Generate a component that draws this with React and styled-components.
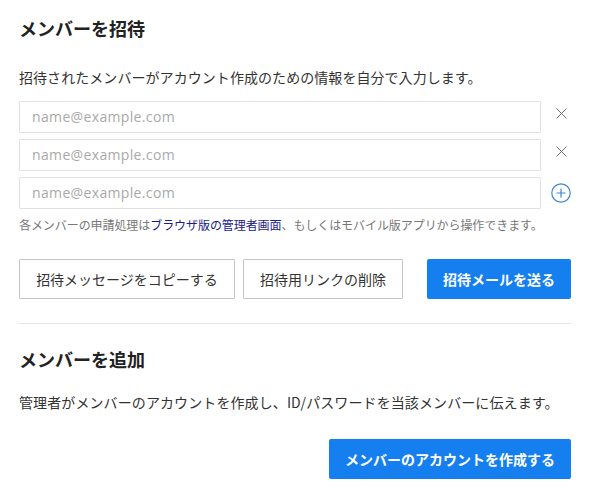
import React from "react";
import styled, { createGlobalStyle } from "styled-components";

const GlobalStyle = createGlobalStyle`
  html, body {
    margin: 0;
    padding: 0;
    background: #fff;
  }
  body {
    font-family: "Noto Sans CJK JP", "Noto Sans", sans-serif;
    color: #333;
  }
`;

const Page = styled.div`
  width: 552px;
  padding: 17px 26px 14px 19px;
`;

const Section = styled.section`
  display: flex;
  flex-direction: column;
`;

const Title = styled.h2`
  margin: 0;
  font-size: 18px;
  line-height: 22px;
  font-weight: 700;
  color: #222;
`;

const Description = styled.p`
  margin: ${(p) => p.$top}px 0 0;
  font-size: 14px;
  line-height: 20px;
  letter-spacing: ${(p) => p.$spacing || 0}px;
  color: #333;
  white-space: nowrap;
`;

const InputList = styled.div`
  margin-top: 14px;
  display: flex;
  flex-direction: column;
  gap: 6px;
`;

const InputRow = styled.div`
  display: flex;
  align-items: center;
  gap: 10px;
`;

const EmailInput = styled.input`
  flex: none;
  width: 522px;
  height: 32px;
  box-sizing: border-box;
  padding: 0 12px 2px;
  border: 1px solid #e2e2e2;
  border-radius: 1px;
  font-family: "Open Sans", "Noto Sans", sans-serif;
  font-size: 14px;
  letter-spacing: 0.35px;
  color: #333;
  outline: none;

  &::placeholder {
    color: #a9a9a9;
    opacity: 1;
  }
`;

const IconButton = styled.button`
  flex: none;
  width: 20px;
  height: 20px;
  padding: 0;
  border: none;
  background: none;
  display: flex;
  align-items: center;
  justify-content: center;
  transform: translateY(${(p) => p.$shift || 0}px);
`;

const Hint = styled.p`
  margin: 7px 0 0;
  font-size: 12px;
  line-height: 18px;
  letter-spacing: -0.07px;
  color: #777;
  white-space: nowrap;

  a {
    color: #1a1a8c;
    text-decoration: none;
  }
`;

const Actions = styled.div`
  margin-top: 25px;
  display: flex;
  gap: 8px;
`;

const OutlineButton = styled.button`
  width: ${(p) => p.$width}px;
  height: 40px;
  box-sizing: border-box;
  padding: 0;
  background: #fff;
  border: 1px solid #c4c4c4;
  border-radius: 1px;
  font-family: inherit;
  font-size: 14px;
  color: #333;
`;

const PrimaryButton = styled.button`
  width: ${(p) => p.$width}px;
  height: 40px;
  margin-left: ${(p) => p.$push || 0}px;
  box-sizing: border-box;
  padding: 0;
  background: #167ff0;
  border: none;
  border-radius: 2px;
  font-family: inherit;
  font-size: 14px;
  font-weight: 700;
  color: #fff;
`;

const Divider = styled.hr`
  margin: 24px 0 24px;
  border: none;
  border-top: 1px solid #e6e6e6;
`;

const RightActions = styled.div`
  margin-top: 27px;
  display: flex;
  justify-content: flex-end;
`;

const CloseIcon = () => (
  <svg width="13" height="13" viewBox="0 0 13 13" fill="none" stroke="#6f6f6f" strokeWidth="1">
    <path d="M1.5 1.5 L11.5 11.5 M11.5 1.5 L1.5 11.5" />
  </svg>
);

const PlusIcon = () => (
  <svg width="20" height="20" viewBox="0 0 20 20" fill="none" stroke="#3f88c9" strokeWidth="1.2">
    <circle cx="10" cy="10" r="9.2" />
    <path d="M10 5.5 V14.5 M5.5 10 H14.5" />
  </svg>
);

const App = () => {
  const rows = [{ icon: "close" }, { icon: "close" }, { icon: "plus" }];

  return (
    <>
      <GlobalStyle />
      <Page>
        <Section>
          <Title>メンバーを招待</Title>
          <Description $top={28} $spacing={0.06}>招待されたメンバーがアカウント作成のための情報を自分で入力します。</Description>
          <InputList>
            {rows.map((row, i) => (
              <InputRow key={i}>
                <EmailInput placeholder="name@example.com" />
                <IconButton $shift={row.icon === "close" ? -4 : 0}>
                  {row.icon === "close" ? <CloseIcon /> : <PlusIcon />}
                </IconButton>
              </InputRow>
            ))}
          </InputList>
          <Hint>
            各メンバーの申請処理は<a href="#admin">ブラウザ版の管理者画面</a>、もしくはモバイル版アプリから操作できます。
          </Hint>
          <Actions>
            <OutlineButton $width={216}>招待メッセージをコピーする</OutlineButton>
            <OutlineButton $width={160}>招待用リンクの削除</OutlineButton>
            <PrimaryButton $width={144} $push={16}>招待メールを送る</PrimaryButton>
          </Actions>
        </Section>
        <Divider />
        <Section>
          <Title>メンバーを追加</Title>
          <Description $top={22} $spacing={0.1}>管理者がメンバーのアカウントを作成し、ID/パスワードを当該メンバーに伝えます。</Description>
          <RightActions>
            <PrimaryButton $width={242}>メンバーのアカウントを作成する</PrimaryButton>
          </RightActions>
        </Section>
      </Page>
    </>
  );
};

export default App;
